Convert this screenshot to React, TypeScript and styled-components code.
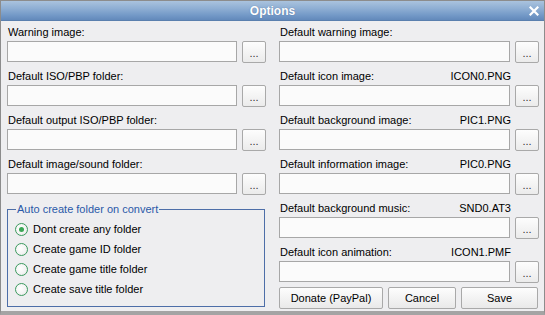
import React from "react";
import styled, { createGlobalStyle } from "styled-components";

const Global = createGlobalStyle`
  html, body { margin: 0; padding: 0; background: #ffffff; }
  body { font-family: "Liberation Sans", Arial, sans-serif; font-size: 11px; color: #000; }
  * { box-sizing: border-box; }
`;

const Window = styled.div`
  width: 545px;
  height: 315px;
  display: flex;
  flex-direction: column;
  background: #eeeef0;
  border: 1px solid #8c8c8c;
  border-bottom: 4px solid #a4a4a4;
  overflow: hidden;
`;

const TitleBar = styled.div`
  position: relative;
  height: 20px;
  flex: 0 0 20px;
  display: flex;
  align-items: center;
  justify-content: center;
  background: linear-gradient(#aac3de 0%, #8eaed3 40%, #7399c7 75%, #6289bb 100%);
  border-bottom: 1px solid #5a7fae;
`;

const Title = styled.span`
  color: #fff;
  font-weight: bold;
  font-size: 12px;
  text-shadow: 0 0 1px rgba(40, 70, 120, 0.6);
`;

const Close = styled.span`
  position: absolute;
  right: 5px;
  top: 5px;
  width: 10px;
  height: 10px;
  display: flex;
`;

const Body = styled.div`
  flex: 1;
  display: grid;
  grid-template-columns: 259px 260px;
  column-gap: 13px;
  padding: 4px 0 0 6px;
`;

const Column = styled.div`
  display: flex;
  flex-direction: column;
  gap: 6px;
`;

const Field = styled.div`
  display: flex;
  flex-direction: column;
  gap: 2px;
`;

const LabelRow = styled.div`
  height: 14px;
  line-height: 14px;
  display: flex;
  justify-content: space-between;
  width: 232px;
  padding-left: 1px;
`;

const InputRow = styled.div`
  display: flex;
  gap: 5px;
  height: 22px;
`;

const TextBox = styled.div`
  width: 232px;
  height: 21px;
  background: #fbfbfb;
  border: 1px solid #a7a7a7;
`;

const Browse = styled.button`
  width: 24px;
  height: 22px;
  padding: 0 0 3px;
  font: inherit;
  font-size: 11px;
  color: #333;
  border: 1px solid #a9a9a9;
  border-radius: 2px;
  background: linear-gradient(#fdfdfd, #ebebeb);
  display: flex;
  align-items: flex-end;
  justify-content: center;
`;

const Group = styled.div`
  position: relative;
  margin: 8px 1px 0 0;
  padding: 9px 0 0 7px;
  height: 98px;
  border: 1px solid #4d6ea8;
  display: flex;
  flex-direction: column;
`;

const Legend = styled.span`
  position: absolute;
  top: -7px;
  left: 8px;
  padding: 0 1px;
  background: #eeeef0;
  color: #2a59a8;
  line-height: 13px;
`;

const Radio = styled.label`
  display: flex;
  align-items: center;
  gap: 5px;
  height: 20px;
`;

const Circle = styled.span<{ $on?: boolean }>`
  width: 13px;
  height: 13px;
  border-radius: 50%;
  border: 1px solid #3b9a5e;
  background: radial-gradient(circle at 40% 40%, #ffffff 0%, #f2f2f2 60%, #dcdcdc 100%);
  display: flex;
  align-items: center;
  justify-content: center;
  &::after {
    content: "";
    width: 5px;
    height: 5px;
    border-radius: 50%;
    background: ${(p) => (p.$on ? "#3aa655" : "transparent")};
  }
`;

const Buttons = styled.div`
  display: flex;
  gap: 5px;
  margin-top: -2px;
`;

const Btn = styled.button<{ $w: number }>`
  width: ${(p) => p.$w}px;
  height: 22px;
  font: inherit;
  font-size: 11px;
  color: #000;
  border: 1px solid #a9a9a9;
  border-radius: 2px;
  background: linear-gradient(#fdfdfd, #e9e9e9);
  padding: 0;
`;

const leftFields = [
  "Warning image:",
  "Default ISO/PBP folder:",
  "Default output ISO/PBP folder:",
  "Default image/sound folder:",
];

const rightFields: [string, string][] = [
  ["Default warning image:", ""],
  ["Default icon image:", "ICON0.PNG"],
  ["Default background image:", "PIC1.PNG"],
  ["Default information image:", "PIC0.PNG"],
  ["Default background music:", "SND0.AT3"],
  ["Default icon animation:", "ICON1.PMF"],
];

const radios = [
  "Dont create any folder",
  "Create game ID folder",
  "Create game title folder",
  "Create save title folder",
];

function FieldBlock({ label, file }: { label: string; file?: string }) {
  return (
    <Field>
      <LabelRow>
        <span>{label}</span>
        {file ? <span>{file}</span> : null}
      </LabelRow>
      <InputRow>
        <TextBox />
        <Browse>...</Browse>
      </InputRow>
    </Field>
  );
}

export default function App() {
  return (
    <>
      <Global />
      <Window>
        <TitleBar>
          <Title>Options</Title>
          <Close>
            <svg width="10" height="10" viewBox="0 0 10 10">
              <path d="M1.5 1.5 L8.5 8.5 M8.5 1.5 L1.5 8.5" stroke="#fff" strokeWidth="2.2" strokeLinecap="square" />
            </svg>
          </Close>
        </TitleBar>
        <Body>
          <Column>
            {leftFields.map((l) => (
              <FieldBlock key={l} label={l} />
            ))}
            <Group>
              <Legend>Auto create folder on convert</Legend>
              {radios.map((r, i) => (
                <Radio key={r}>
                  <Circle $on={i === 0} />
                  <span>{r}</span>
                </Radio>
              ))}
            </Group>
          </Column>
          <Column>
            {rightFields.map(([l, f]) => (
              <FieldBlock key={l} label={l} file={f} />
            ))}
            <Buttons>
              <Btn $w={104}>Donate (PayPal)</Btn>
              <Btn $w={68}>Cancel</Btn>
              <Btn $w={77}>Save</Btn>
            </Buttons>
          </Column>
        </Body>
      </Window>
    </>
  );
}
